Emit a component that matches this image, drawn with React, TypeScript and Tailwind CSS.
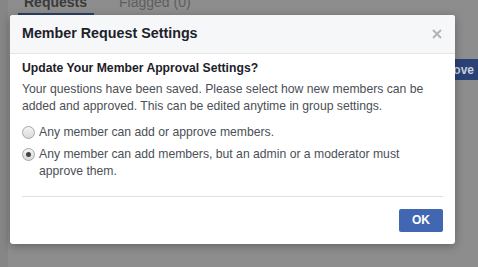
import React from 'react';

function Radio({ checked }: { checked?: boolean }) {
  return (
    <span className="mt-[2px] flex h-[13px] w-[13px] shrink-0 items-center justify-center rounded-full border border-[#a7a7a7] bg-gradient-to-b from-[#f4f4f4] to-[#d9d9d9]">
      {checked && <span className="h-[5px] w-[5px] rounded-full bg-[#444]" />}
    </span>
  );
}

export default function App() {
  return (
    <div className="relative h-[267px] w-[478px] overflow-hidden bg-[#8d8d8d] font-['Liberation_Sans',Arial,sans-serif]">
      {/* page behind the overlay */}
      <div className="flex h-full">
        <div className="w-[8px] bg-[#868686]" />
        <div className="flex flex-1 flex-col">
          <div className="-mt-[5px] flex h-[20px] items-start gap-[24px] pl-[8px]">
            <div className="flex flex-col items-center">
              <span className="px-[8px] text-[14px] font-bold leading-[15px] text-[#3a3a3a]">Requests</span>
              <span className="mt-[3px] h-[2px] w-[76px] bg-[#2c3f66]" />
            </div>
            <span className="text-[14px] leading-[15px] text-[#5e5e5e]">Flagged (0)</span>
          </div>
          <div className="mt-[44px] flex justify-end">
            <div className="-mr-[30px] flex h-[21px] w-[55px] items-center justify-end rounded-[2px] bg-[#2a4276] pr-[34px] text-[12px] font-bold text-[#c9d0dc]">
              ove
            </div>
          </div>
        </div>
      </div>

      {/* modal */}
      <div className="absolute left-[10px] top-[15px] w-[445px] overflow-hidden rounded-[3px] bg-white shadow-[0_2px_10px_rgba(0,0,0,0.3)]">
        <div className="flex h-[39px] items-center justify-between border-b border-[#e5e5e5] bg-[#f6f7f9] px-[12px]">
          <span className="text-[14.3px] font-bold text-[#1d2129]">Member Request Settings</span>
          <svg width="10" height="10" viewBox="0 0 10 10" className="mr-[1px]">
            <path d="M1 1L9 9M9 1L1 9" stroke="#b4b4b4" strokeWidth="2" />
          </svg>
        </div>
        <div className="px-[12px] pb-[12px] pt-[6px] text-[12.2px] leading-[17px] text-[#4b4f56]">
          <div className="font-bold text-[#1d2129]">Update Your Member Approval Settings?</div>
          <p className="mt-[4px]">
            Your questions have been saved. Please select how new members can be added and approved. This can be edited anytime in group settings.
          </p>
          <div className="mt-[9px] flex gap-[4px]">
            <Radio />
            <span>Any member can add or approve members.</span>
          </div>
          <div className="mt-[5px] flex gap-[4px]">
            <Radio checked />
            <span className="pr-[30px]">Any member can add members, but an admin or a moderator must approve them.</span>
          </div>
          <div className="mt-[16px] h-px bg-[#dddfe2]" />
          <div className="mt-[12px] flex justify-end">
            <button className="h-[23px] w-[44px] rounded-[2px] bg-[#4267b2] text-[12px] font-bold text-white">OK</button>
          </div>
        </div>
      </div>
    </div>
  );
}
